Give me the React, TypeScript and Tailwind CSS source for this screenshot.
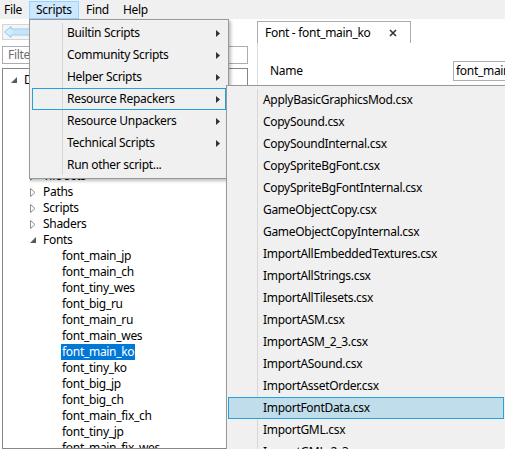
import React from 'react';

const FONT = "font-['Noto_Sans','Liberation_Sans',sans-serif]";

const dataChildren = ['General info', 'Global init', 'Audio groups', 'Sounds', 'Sprites', 'Tile sets', 'Paths', 'Scripts', 'Shaders'];
const fontChildren = [
  'font_main_jp', 'font_main_ch', 'font_tiny_wes', 'font_big_ru', 'font_main_ru', 'font_main_wes',
  'font_main_ko', 'font_tiny_ko', 'font_big_jp', 'font_big_ch', 'font_main_fix_ch', 'font_tiny_jp', 'font_main_fix_wes',
];

const scriptMenu = [
  { label: 'Builtin Scripts', sub: true },
  { label: 'Community Scripts', sub: true },
  { label: 'Helper Scripts', sub: true },
  { label: 'Resource Repackers', sub: true, open: true },
  { label: 'Resource Unpackers', sub: true },
  { label: 'Technical Scripts', sub: true },
  { label: 'Run other script...', sub: false },
];

const repackers = [
  'ApplyBasicGraphicsMod.csx', 'CopySound.csx', 'CopySoundInternal.csx', 'CopySpriteBgFont.csx',
  'CopySpriteBgFontInternal.csx', 'GameObjectCopy.csx', 'GameObjectCopyInternal.csx',
  'ImportAllEmbeddedTextures.csx', 'ImportAllStrings.csx', 'ImportAllTilesets.csx', 'ImportASM.csx',
  'ImportASM_2_3.csx', 'ImportASound.csx', 'ImportAssetOrder.csx', 'ImportFontData.csx', 'ImportGML.csx',
  'ImportGML_2_3.csx',
];

const Expanded = () => (
  <svg width="6" height="6" viewBox="0 0 6 6">
    <path d="M6 0 L6 6 L0 6 Z" fill="#595959" />
  </svg>
);

const Collapsed = () => (
  <svg width="6" height="9" viewBox="0 0 6 9">
    <path d="M0.5 0.5 L5 4.5 L0.5 8.5 Z" fill="none" stroke="#8c8c8c" strokeWidth="1" />
  </svg>
);

const MenuArrow = () => (
  <svg width="4" height="7" viewBox="0 0 4 7">
    <path d="M0 0 L4 3.5 L0 7 Z" fill="#333" />
  </svg>
);

type RowProps = { level: number; label: string; toggle?: 'open' | 'closed'; selected?: boolean };

const TreeRow = ({ level, label, toggle, selected }: RowProps) => (
  <div className="flex items-center h-[16px]" style={{ paddingLeft: 1 + level * 19 }}>
    <div className="w-[19px] h-[16px] flex items-center justify-center shrink-0">
      {toggle === 'open' && <Expanded />}
      {toggle === 'closed' && <Collapsed />}
    </div>
    <span
      className={`px-[1px] h-[16px] leading-[16px] whitespace-nowrap ${selected ? 'bg-[#0078d7] text-white' : 'text-black'}`}
    >
      {label}
    </span>
  </div>
);

const BackArrow = () => (
  <svg width="26" height="12" viewBox="0 0 26 12">
    <path d="M0.5 6 L7 0.5 L7 3 L25.5 3 L25.5 9 L7 9 L7 11.5 Z" fill="#d4ecfb" stroke="#8fcbef" strokeWidth="1" />
    <path d="M9 5 H24 M9 7 H24" stroke="#b6dcf4" strokeWidth="1" />
  </svg>
);

export default function App() {
  return (
    <div className={`relative w-[505px] h-[449px] overflow-hidden bg-white text-[12px] tracking-[-0.3px] text-black ${FONT}`}>
      {/* Menu bar */}
      <div className="h-[19px] bg-[#f0f0f0] flex items-stretch">
        <div className="w-[29px] pl-[4px] flex items-center">File</div>
        <div className="w-[50px] pl-[6px] mt-[1px] flex items-center bg-[#cce8ff] border border-[#99d1ff]">Scripts</div>
        <div className="w-[37px] pl-[7px] flex items-center">Find</div>
        <div className="w-[37px] pl-[7px] flex items-center">Help</div>
      </div>

      <div className="flex h-[430px]">
        {/* Left panel */}
        <div className="w-[250px] shrink-0 pl-[2px] pr-[2px] flex flex-col">
          <div className="mt-[5px] w-[40px] h-[16px] border border-[#d5d5d5] bg-[#f4f4f4] flex items-center pl-[1px]">
            <BackArrow />
          </div>
          <div className="mt-[6px] h-[18px] border border-[#abadb3] bg-white flex items-center pl-[5px] text-[#6d6d6d]">
            Filter
          </div>
          <div className="mt-[4px] flex-1 border border-[#828790] pt-[3px] overflow-hidden">
            <TreeRow level={0} label="Data" toggle="open" />
            {dataChildren.map((c) => (
              <TreeRow key={c} level={1} label={c} toggle="closed" />
            ))}
            <TreeRow level={1} label="Fonts" toggle="open" />
            {fontChildren.map((c) => (
              <TreeRow key={c} level={2} label={c} selected={c === 'font_main_ko'} />
            ))}
          </div>
        </div>

        {/* Right panel */}
        <div className="flex-1 min-w-0 flex flex-col pl-[7px] pt-[2px]">
          <div className="flex">
            <div className="h-[22px] w-[154px] border border-b-0 border-[#acacac] bg-white flex items-center pl-[7px]">
              <span>Font - font_main_ko</span>
              <svg className="ml-[18px]" width="8" height="8" viewBox="0 0 8 8">
                <path d="M1 1 L7 7 M7 1 L1 7" stroke="#333" strokeWidth="1.6" />
              </svg>
            </div>
          </div>
          <div className="flex-1 border-l border-[#dcdcdc] bg-white">
            <div className="flex items-center mt-[18px] h-[20px]">
              <span className="ml-[12px] w-[183px] shrink-0">Name</span>
              <div className="flex-1 h-[20px] border border-r-0 border-[#abadb3] pl-[2px] flex items-center whitespace-nowrap overflow-hidden">
                font_main_ko
              </div>
            </div>
          </div>
        </div>
      </div>

      {/* Scripts dropdown */}
      <div className="absolute left-[29px] top-[19px] w-[200px] h-[160px] bg-[#f0f0f0] border border-[#999999] p-[2px] shadow-[2px_2px_3px_rgba(0,0,0,0.25)]">
        <div className="absolute left-[32px] top-[3px] bottom-[3px] w-px bg-[#d7d7d7]" />
        {scriptMenu.map((m) => (
          <div
            key={m.label}
            className={`relative h-[22px] flex items-center border ${m.open ? 'border-[#26a0da]' : 'border-transparent'}`}
          >
            <span className="ml-[34px] flex-1 whitespace-nowrap">{m.label}</span>
            {m.sub && (
              <span className="mr-[5px] flex items-center">
                <MenuArrow />
              </span>
            )}
          </div>
        ))}
      </div>

      {/* Resource Repackers submenu */}
      <div className="absolute left-[226px] top-[85px] w-[280px] h-[380px] bg-[#f0f0f0] border border-[#999999] pt-[3px] px-[1px] shadow-[2px_2px_3px_rgba(0,0,0,0.25)]">
        <div className="absolute left-[30px] top-[3px] bottom-0 w-px bg-[#d7d7d7]" />
        {repackers.map((r) => (
          <div
            key={r}
            className={`relative h-[22px] flex items-center border ${
              r === 'ImportFontData.csx' ? 'bg-[#c0ddeb] border-[#26a0da]' : 'border-transparent'
            }`}
          >
            <span className="ml-[34px] whitespace-nowrap">{r}</span>
          </div>
        ))}
      </div>
    </div>
  );
}
